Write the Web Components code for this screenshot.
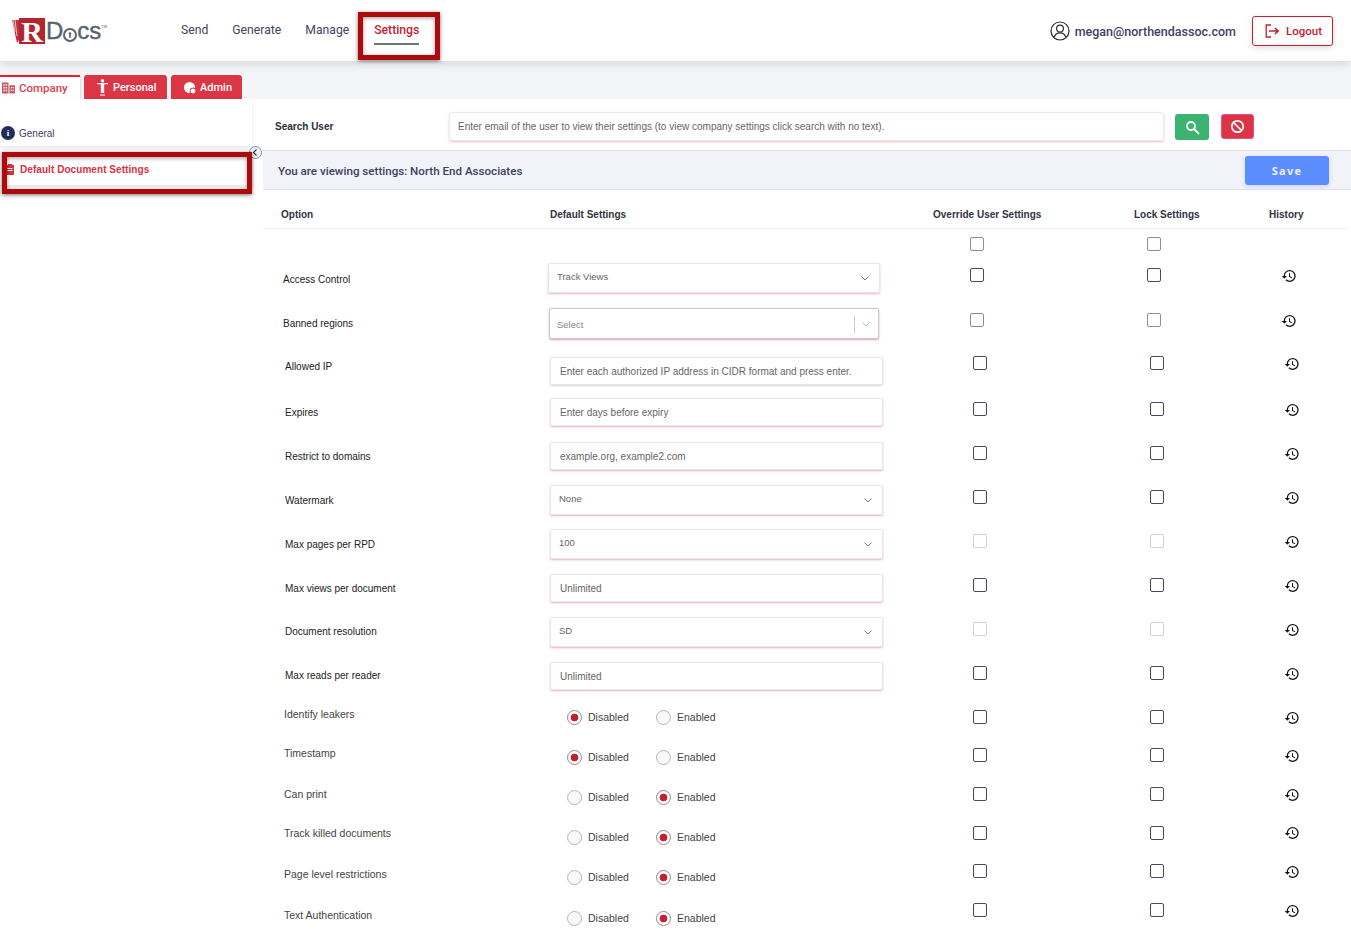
<!DOCTYPE html>
<html><head><meta charset="utf-8"><title>RDocs Settings</title>
<style>
html,body{margin:0;padding:0;height:100%;overflow:hidden;background:#fff;font-family:Roboto,"Liberation Sans",sans-serif;color:#333}
</style></head><body>
<app-header></app-header>
<tab-strip></tab-strip>
<div style="display:flex;height:847px">
  <side-nav></side-nav>
  <main style="margin-left:11px;flex:1;min-width:0;display:block">
    <search-bar></search-bar>
    <view-band></view-band>
    <table-head></table-head>
    <setting-row shift h="30" top-only t="0 0 8 0" cbtone="gray"></setting-row>
    <setting-row shift h="45" label="Access Control" kind="select" value="Track Views" t="14 4 9 9"></setting-row>
    <setting-row shift h="46" label="Banned regions" kind="multi" value="Select" t="13 4 9 9" cbtone="gray"></setting-row>
    <setting-row h="44" label="Allowed IP" kind="input" value="Enter each authorized IP address in CIDR format and press enter." t="10 7 6 6" flat></setting-row>
    <setting-row h="44" label="Expires" kind="input" value="Enter days before expiry" t="12 4 8 8"></setting-row>
    <setting-row h="44" label="Restrict to domains" kind="input" value="example.org, example2.com" t="12 4 8 8"></setting-row>
    <setting-row h="44" label="Watermark" kind="select" value="None" t="12 3 8 8"></setting-row>
    <setting-row h="44" label="Max pages per RPD" kind="select" value="100" t="12 3 8 8" cbtone="off"></setting-row>
    <setting-row h="44" label="Max views per document" kind="input" value="Unlimited" t="12 4 8 8"></setting-row>
    <setting-row h="44" label="Document resolution" kind="select" value="SD" t="11 3 8 8" cbtone="off"></setting-row>
    <setting-row h="44" label="Max reads per reader" kind="input" value="Unlimited" t="11 4 8 8"></setting-row>
    <setting-row h="40" label="Identify leakers" kind="radio" value="Disabled" t="5 8 8 8"></setting-row>
    <setting-row h="40" label="Timestamp" kind="radio" value="Disabled" t="4 8 6 6"></setting-row>
    <setting-row h="40" label="Can print" kind="radio" value="Enabled" t="5 8 5 5"></setting-row>
    <setting-row h="40" label="Track killed documents" kind="radio" value="Enabled" t="4 8 4 3"></setting-row>
    <setting-row h="40" label="Page level restrictions" kind="radio" value="Enabled" t="5 8 2 2"></setting-row>
    <setting-row h="44" label="Text Authentication" kind="radio" value="Enabled" t="6 9 1 1"></setting-row>
  </main>
</div>
<anno-box style="left:358px;top:12px;width:82px;height:48px"></anno-box>
<anno-box style="left:2px;top:152px;width:250px;height:42px"></anno-box>
<script>
const HISTORY='M13 3a9 9 0 0 0-9 9H1l3.89 3.89.07.14L9 12H6c0-3.87 3.13-7 7-7s7 3.13 7 7-3.13 7-7 7c-1.93 0-3.68-.79-4.94-2.06l-1.42 1.42A8.954 8.954 0 0 0 13 21a9 9 0 0 0 0-18zm-1 5v5l4.28 2.54.72-1.21-3.5-2.08V8H12z';
const SANS='"Liberation Sans",Arial,sans-serif';
function def(name,html){
  customElements.define(name,class extends HTMLElement{
    constructor(){super();this.attachShadow({mode:'open'}).innerHTML=html;}
  });
}
def('app-header',`<style>
:host{display:flex;align-items:flex-start;height:61px;background:#fff;box-shadow:0 2px 10px rgba(0,0,0,.14);position:relative;z-index:3;font-family:Roboto,sans-serif}
.logo{display:flex;align-items:center;margin:18px 0 0 12px;width:169px;height:26px;flex:none}
.cards{width:7px;height:24px;flex:none;display:block}
.r{width:26px;height:26px;background:#b5252f;color:#fff;font:700 30px/27px "Liberation Serif",serif;text-align:center;flex:none}
.d{font:400 24px/26px "Liberation Sans",sans-serif;color:#5b6370;-webkit-text-stroke:.4px #5b6370;margin-left:1px}
.lock{width:14px;height:14px;margin:7px 0 0;flex:none}
.tm{font:400 4px/6px "Liberation Sans",sans-serif;color:#5b6370;align-self:flex-start;margin-top:6px}
nav{display:flex;gap:24px;margin-top:23px;font-size:12.2px;line-height:14px;color:#3e4560}
nav span{white-space:nowrap}
nav .on{margin-left:1px;color:#c21f33;font-weight:500;padding-bottom:6px;border-bottom:2px solid #6a7a6a;height:14px}
.sp{flex:1}
.user{display:flex;align-items:center;gap:5px;margin:21px 16px 0 0;font-size:12.5px;font-weight:500;line-height:19px;color:#3d4263}
.out{display:flex;align-items:center;gap:7px;box-sizing:border-box;margin:16px 18px 0 0;width:81px;height:30px;padding-left:12px;border:1px solid #c4202f;border-radius:3px;color:#c4202f;font-size:11.5px;font-weight:500;box-shadow:0 2px 6px rgba(0,0,0,.14)}
</style>
<div class="logo">
<svg class="cards" viewBox="0 0 7 24"><path d="M0 1h7v20l-2 3z" fill="#c0303c"/><path d="M3 1l2 16M1 1l2 12" stroke="#fff" stroke-width=".7"/></svg>
<span class="r">R</span><span class="d">D</span>
<svg class="lock" viewBox="0 0 14 14"><circle cx="7" cy="7" r="6" fill="none" stroke="#5b6370" stroke-width="2"/><circle cx="7" cy="5.5" r="1.3" fill="#5b6370"/><rect x="6.2" y="5.5" width="1.6" height="4.5" fill="#5b6370"/></svg>
<span class="d" style="margin-left:0">cs</span><span class="tm">TM</span></div>
<nav><span>Send</span><span>Generate</span><span>Manage</span><span class="on">Settings</span></nav>
<div class="sp"></div>
<div class="user"><svg width="20" height="20" viewBox="0 0 20 20" fill="none" stroke="#2b2b2b" stroke-width="1.2"><circle cx="10" cy="10" r="9"/><circle cx="10" cy="7.6" r="3.4"/><path d="M4 16.5c1-3.4 3.4-4.7 6-4.7s5 1.3 6 4.7"/></svg><span>megan@northendassoc.com</span></div>
<div class="out"><svg width="14" height="14" viewBox="0 0 14 14" fill="none" stroke="#c4202f" stroke-width="1.3"><path d="M6 1H1.2v12H6"/><path d="M4 7h9M10 4l3 3-3 3" stroke-width="1.6"/></svg><span>Logout</span></div>`);
def('tab-strip',`<style>
:host{display:flex;align-items:flex-start;gap:4px;height:38px;padding-top:14px;box-sizing:border-box;background:#f4f5f8;font-family:Roboto,sans-serif;font-size:11px;font-weight:500;position:relative;z-index:1}
.t{display:flex;align-items:center;box-sizing:border-box;height:25px;border-radius:3px 3px 0 0;background:#dc3545;color:#fff;white-space:nowrap;gap:4px}
.a{width:80px;height:27px;background:#fff;color:#d9404f;font-size:11.5px;border-top:2px solid #e0222f;border-radius:0;padding:0 0 4px 2px;box-shadow:1px 0 2px rgba(0,0,0,.1)}
.p{width:83px;padding-left:13px;gap:5px}
.m{width:71px;padding-left:13px}
</style>
<div class="t a"><svg width="13" height="12" viewBox="0 0 14 12" fill="#c95a66"><path d="M0 0h7v12H0zM8 3h6v9H8z"/><path d="M1.500 2h1.500v1.500H1.500zM4 2h1.500v1.500H4zM1.500 5h1.500v1.500H1.500zM4 5h1.500v1.500H4zM1.500 8h1.500v1.500H1.500zM4 8h1.500v1.500H4zM9.500 5h1.200v1.300H9.500zM11.500 5h1.200v1.300h-1.200zM9.500 8h1.200v1.300H9.500zM11.500 8h1.200v1.300h-1.200z" fill="#fff"/></svg><span>Company</span></div>
<div class="t p"><svg width="11" height="17" viewBox="0 0 11 17" fill="#fff"><circle cx="5.500" cy="1.800" r="1.700"/><path d="M0 4h11v1.200H7.200V14H3.800V5.200H0zM3 15.500h5v1H3z"/></svg><span>Personal</span></div>
<div class="t m"><svg width="12" height="12" viewBox="0 0 12 12"><circle cx="5.500" cy="5.500" r="5.500" fill="#fff"/><circle cx="9" cy="9" r="3" fill="#fff" stroke="#dc3545"/></svg><span>Admin</span></div>`);
def('side-nav',`<style>
:host{display:block;width:252px;flex:none;font-family:${SANS};font-size:10px;background:#fff;position:relative;z-index:1}
.g{display:flex;align-items:center;gap:4px;height:47px;padding:21px 0 0 1px;box-sizing:border-box;color:#3d4560;box-shadow:0 2px 4px rgba(0,0,0,.1)}
.g i{display:block;width:14px;height:14px;border-radius:50%;background:#232d5c;color:#fff;font:700 9px/14px "Liberation Serif",serif;text-align:center}
.d{display:flex;align-items:center;gap:6px;height:36px;padding:4px 0 0 6px;margin-top:3px;box-sizing:border-box;color:#d8303f;font-weight:700;font-size:10px;letter-spacing:.06px;box-shadow:0 2px 3px rgba(0,0,0,.1)}
.rail{position:absolute;left:249px;top:47px;width:13px;height:13px;box-sizing:border-box;border:1px solid #8a93a5;border-radius:50%;background:#eef0f5;z-index:2}
</style>
<div class="g"><i>i</i><span>General</span></div>
<div class="d"><svg width="8" height="11" viewBox="0 0 8 11"><path d="M0 1h2V0h4v1h2v10H0z" fill="#d8303f"/><path d="M1.500 4.500h5M1.500 6.500h5" stroke="#fff"/></svg><span>Default Document Settings</span></div>
<div class="rail"><svg width="11" height="11" viewBox="0 0 11 11" fill="none" stroke="#333" stroke-width="1.200" style="display:block"><path d="M6.500 2.500l-3 3 3 3"/></svg></div>`);
def('search-bar',`<style>
:host{display:flex;align-items:flex-start;height:52px;box-sizing:border-box;border-bottom:1px solid #dfe1e6;font-family:${SANS};background:#fff}
b{width:186px;padding:17px 0 0 12px;box-sizing:border-box;flex:none;font-size:10px;line-height:22px;font-weight:700;color:#2a2f3c}
.i{box-sizing:border-box;width:715px;height:29px;margin-top:13px;padding-left:8px;border:1px solid #e9eaf0;border-radius:3px;box-shadow:0 1px 2px rgba(220,53,69,.35);font-size:10px;line-height:28px;color:#666;white-space:nowrap;overflow:hidden}
.s,.c{display:flex;align-items:center;justify-content:center;box-sizing:border-box;height:26px;border-radius:3px;margin-top:15px}
.s{width:34px;background:#3cb371;margin-left:11px}
.c{width:33px;height:25px;background:#dc3545;border:1px solid #ee4d8b;margin-left:12px}
</style>
<b>Search User</b><div class="i">Enter email of the user to view their settings (to view company settings click search with no text).</div>
<div class="s"><svg width="15" height="15" viewBox="0 0 15 15" fill="none" stroke="#fff" stroke-width="1.800"><circle cx="6" cy="6" r="4"/><path d="M9 9l5 5"/></svg></div>
<div class="c"><svg width="15" height="15" viewBox="0 0 15 15" fill="none" stroke="#fff" stroke-width="1.700"><circle cx="7.500" cy="7.500" r="5.700"/><path d="M3.500 3.500l8 8"/></svg></div>`);
def('view-band',`<style>
:host{display:flex;align-items:center;justify-content:space-between;height:39px;box-sizing:border-box;padding:1px 22px 0 15px;background:#f1f3f9;border-bottom:1px solid #e2e4ea;font-family:Roboto,sans-serif;font-size:11.6px;font-weight:500;color:#3d4263}
.b{width:84px;height:29px;border-radius:3px;background:#5b8dff;color:#eaf0ff;font:700 11px/29px "Open Sans",sans-serif;letter-spacing:1.200px;text-align:center;box-shadow:0 2px 5px rgba(91,141,255,.25)}
</style><span>You are viewing settings: North End Associates</span><div class="b">Save</div>`);
def('table-head',`<style>
:host{display:grid;grid-template-columns:269px 383px 201px 135px auto;height:39px;width:1084px;padding-left:18px;box-sizing:border-box;border-bottom:1px solid #f0f1f4;font-family:${SANS};font-size:10px;font-weight:700;line-height:49px;color:#2f3442;white-space:nowrap}
</style><span>Option</span><span>Default Settings</span><span>Override User Settings</span><span>Lock Settings</span><span>History</span>`);
customElements.define('setting-row',class extends HTMLElement{
  constructor(){super();this.attachShadow({mode:'open'});}
  connectedCallback(){
    const a=n=>this.getAttribute(n);
    const [tl,tc,tb,th]=a('t').split(' ');
    const shift=this.hasAttribute('shift'),kind=a('kind'),v=a('value')||'',label=a('label')||'';
    const tone=a('cbtone')||'';
    const chev=c=>`<svg class="chev" width="8" height="5" viewBox="0 0 8 5" fill="none" stroke="${c}" stroke-width="1"><path d="M.5.5L4 4 7.500.5"/></svg>`;
    let ctrl='';
    if(kind==='input')ctrl=`<div class="box inp ${this.hasAttribute('flat')?'flat':''}">${v}</div>`;
    if(kind==='select')ctrl=`<div class="box sel"><span>${v}</span>${chev('#777')}</div>`;
    if(kind==='multi')ctrl=`<div class="box multi"><span>${v}</span><i></i>${chev('#bbb')}</div>`;
    if(kind==='radio')ctrl=`<div class="radios"><span class="r ${v==='Disabled'?'on':''}"></span><span class="l">Disabled</span><span class="r ${v==='Enabled'?'on':''}"></span><span class="l">Enabled</span></div>`;
    const hist=this.hasAttribute('top-only')?'':`<svg width="16" height="16" viewBox="0 0 24 24" fill="#111"><path d="${HISTORY}"/></svg>`;
    this.shadowRoot.innerHTML=`<style>
:host{display:grid;grid-template-columns:265px ${shift?332:333}px 90px 177px 134px auto;align-items:start;height:${a('h')}px;padding-left:${shift?20:22}px;font-family:${SANS};font-size:10px;color:#333}
.lb{margin-top:${tl}px;line-height:14px;${kind==='radio'?'margin-left:-1px;color:#444;font-size:10.5px;':'color:#222;'}white-space:nowrap}
.ct{margin-top:${tc}px;min-width:0}
.cb{display:block;margin-top:${tb}px;box-sizing:border-box;width:14px;height:14px;border-radius:2px;border:${tone==='gray'?'1.500px':'1.300px'} solid ${tone==='gray'?'#8a8ca3':tone==='off'?'#cfd0d8':'#454a66'}}
.h{margin-top:${th}px;height:16px;line-height:0}
.box{box-sizing:border-box;width:100%;border:1px solid #e6e7ee;border-radius:2px;background:#fff;box-shadow:0 1px 2px rgba(220,53,69,.4);color:#666;white-space:nowrap;overflow:hidden}
.inp{height:28px;line-height:27px;padding-left:9px}
.flat{box-shadow:0 1px 2px rgba(120,125,160,.35)}
.sel{display:flex;align-items:center;justify-content:space-between;height:30px;padding:0 10px 4px 8px;font-size:9.5px}
.sel .chev{margin-top:5px}
.multi{display:flex;align-items:center;width:330px;height:31px;margin-left:1px;padding:1px 8px 0 7px;font-size:9.5px;color:#888;border-color:#c8c9cc;box-shadow:0 1px 2px rgba(220,53,69,.5)}
.multi span{flex:1}.multi i{display:block;width:1px;height:17px;background:#ccc;margin-right:7px}
.radios{display:grid;grid-template-columns:15px 62px 15px auto;column-gap:6px;margin-left:17px;align-items:center;font-size:10.5px;color:#444}
.l{line-height:15px}
.r{box-sizing:border-box;width:15px;height:15px;border-radius:50%;border:1.300px solid #b5b5b8;background:#f9f9f9}
.r.on{background:radial-gradient(circle,#c4202f 0 3.500px,#fff 4.200px);border-color:#a08488}
</style>
<span class="lb">${label}</span><div class="ct">${ctrl}</div><span></span><span class="cb"></span><span class="cb"></span><div class="h">${hist}</div>`;
  }
});
def('anno-box',`<style>
:host{display:block;position:absolute;box-sizing:border-box;border:5px solid #ad0b0b;box-shadow:0 1px 4px rgba(0,0,0,.55),inset 0 1px 4px rgba(0,0,0,.4);z-index:5;pointer-events:none}
</style>`);
</script>
</body></html>
